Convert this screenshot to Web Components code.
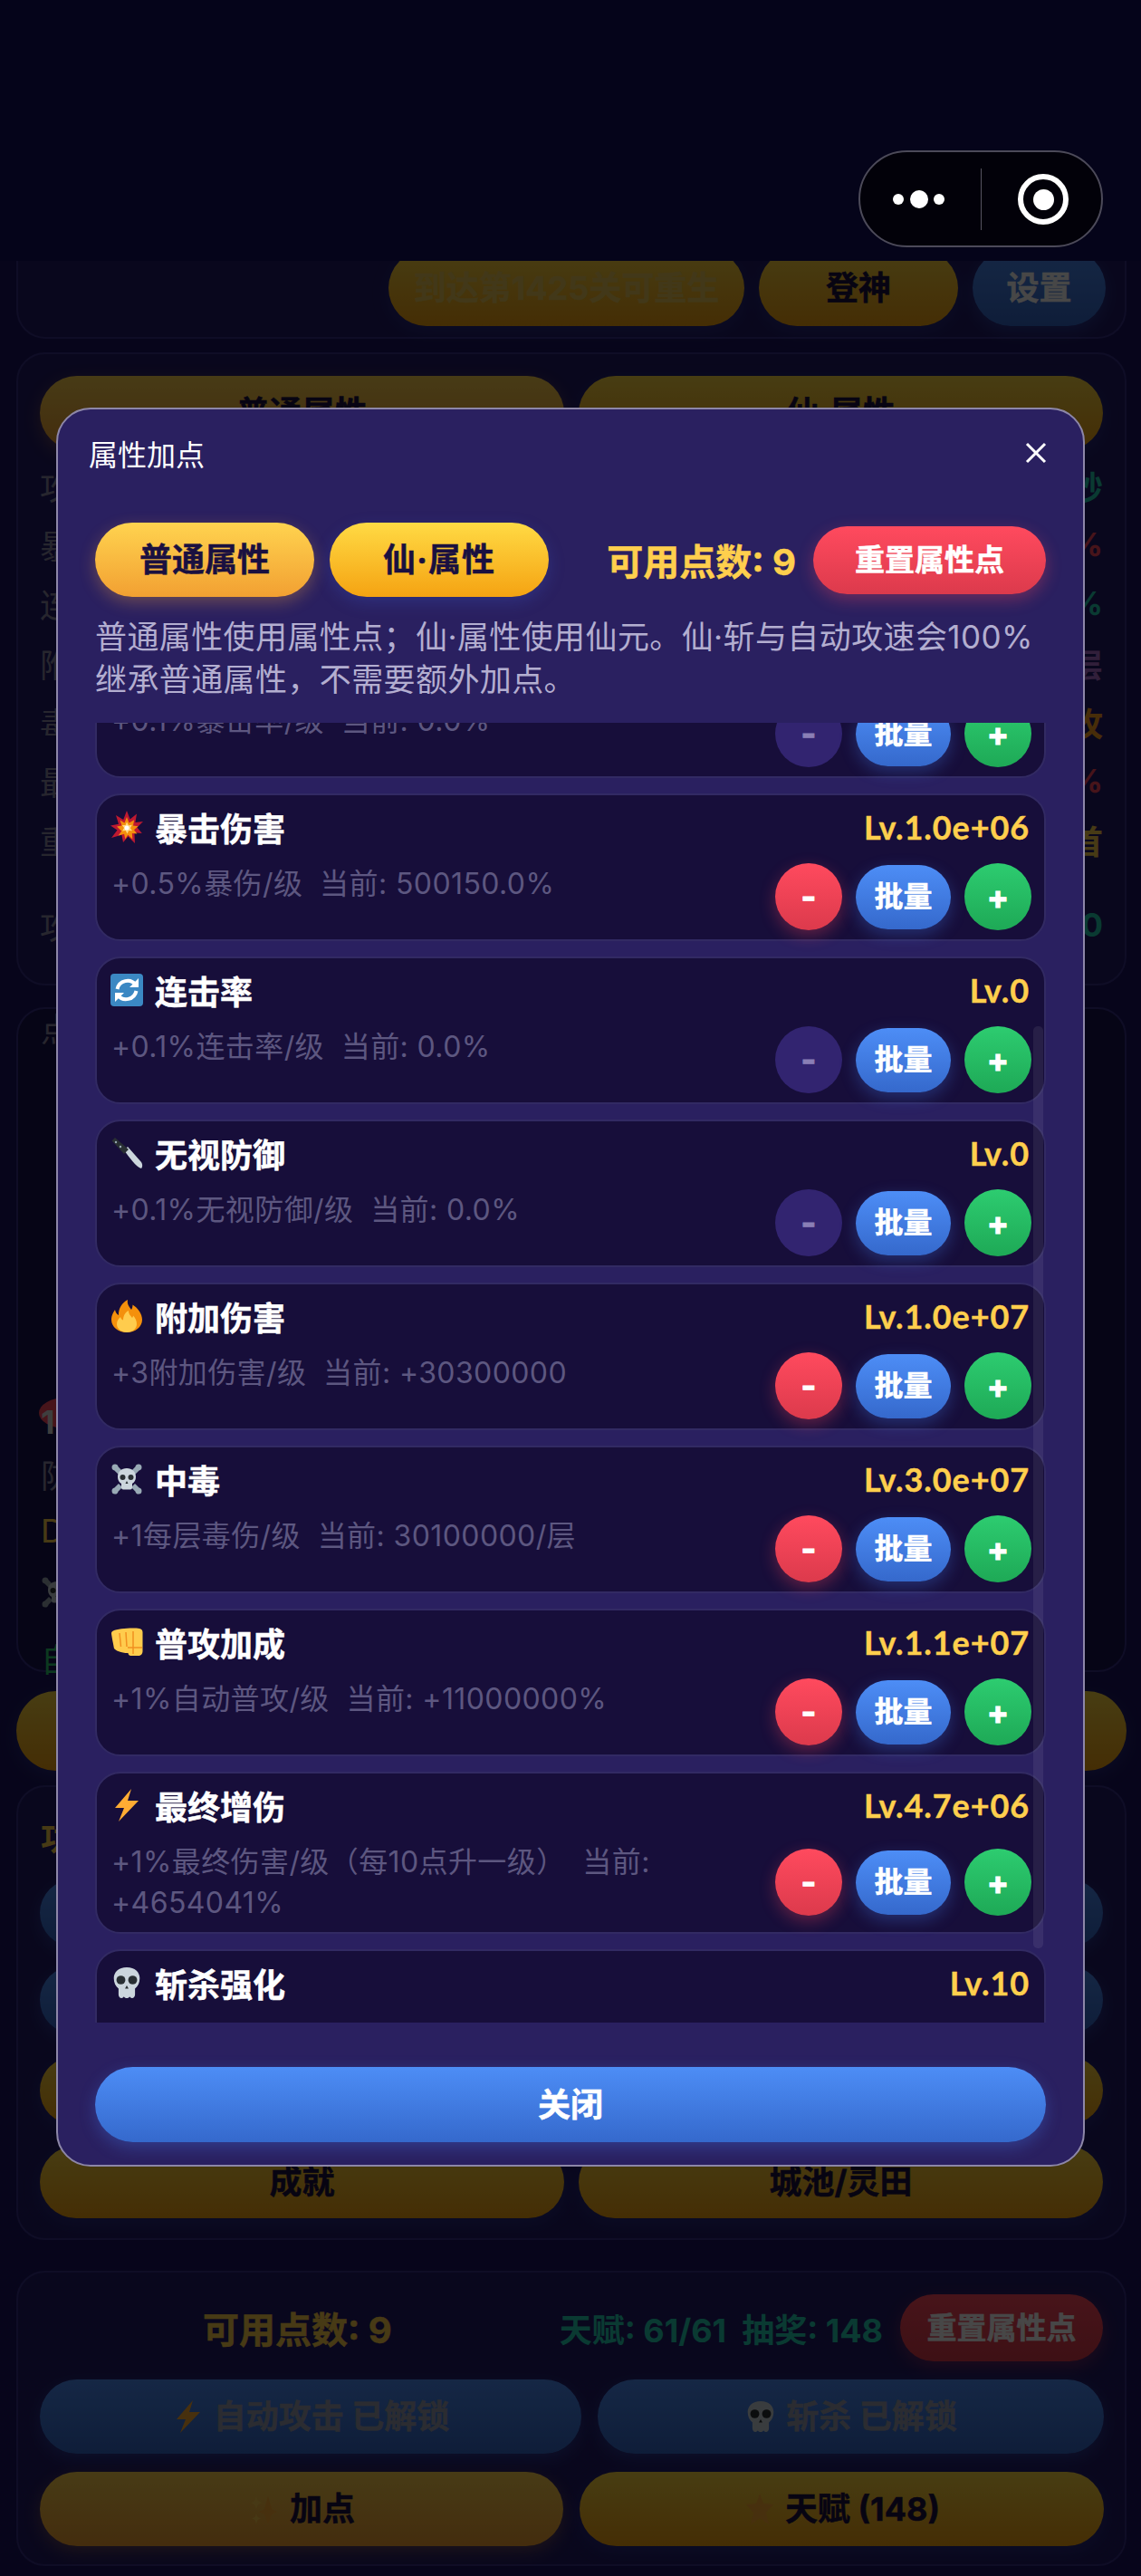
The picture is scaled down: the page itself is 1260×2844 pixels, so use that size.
<!DOCTYPE html>
<html lang="zh">
<head>
<meta charset="utf-8">
<title>属性加点</title>
<style>
  html, body { margin: 0; padding: 0; background: #1c1560; }
  body { font-family: Inter, "Noto Sans CJK SC", sans-serif; width: 1260px; height: 2844px; overflow: hidden; position: relative; }
</style>
</head>
<body>
<game-page></game-page>

<script>
// Emoji artwork shared by the attribute rows and the locked-feature buttons.
const ICONS = {
  burst: '<svg viewBox="0 0 36 36"><path fill="#be1931" d="M18 0l3.600 9.500L29 3.500l-1.600 9.400L36 12l-6.600 6.400 5.400 6.600-8.400-.8L27 36l-7.500-7.500L14 35l-1.600-8.200L1 30l6.500-8.500L0 16.500l9-1.700L6 5l8.200 5z"/><path fill="#f4900c" d="M18 7l2.600 6.400 5.600-3.200-1.200 6.400 5.500.6-4.500 4 3.400 4.400-5.500-.6.4 6.400-5-4.600-3 4.400-1.200-5.400-6.400 1.600 3.500-5L7 17.600l5.500-1.200-2-6 5 3z"/><path fill="#ffd983" d="M18 12.500l2 3.700 3.800-.5-1.800 3.500 2 3-3.800-.2-1.700 3.400-1.800-3.400-3.700.4 2-3.300-2.200-3 3.800-.2z"/><circle cx="18" cy="19" r="2.500" fill="#fff"/></svg>',
  cycle: '<svg viewBox="0 0 36 36"><rect width="36" height="36" rx="4" fill="#3b88c3"/><path fill="none" stroke="#fff" stroke-width="4" d="M28 12.500A11.500 11.500 0 0 0 7.500 17M8 23.500A11.500 11.500 0 0 0 28.500 19"/><path fill="#fff" d="M31 5v10h-10zM5 31V21h10z"/></svg>',
  knife: '<svg viewBox="0 0 36 36"><path fill="#ccd6dd" d="M15 15l4-4 15 17c2 3 1 6 0 7-6-2-13-12-19-20z"/><path fill="#292f33" d="M1.500 4.500L5 1l15 13-5 5z"/><circle cx="6" cy="6" r="1.200" fill="#99aab5"/><circle cx="11" cy="11" r="1.200" fill="#99aab5"/></svg>',
  fire: '<svg viewBox="0 0 36 36"><path fill="#f4900c" d="M35 22c0 8-7.600 14-17 14S1 30 1 22c0-5 2.500-8.500 4-11 .5 3 2 5 4 6C8.500 10 13 3 19 0c-1 5 2 8 4 11 1-1.500 1.500-3.500 1.500-5.500C30 9 35 15 35 22z"/><path fill="#ffcc4d" d="M29 27c0 5-5 9-11 9S7 32 7 27c0-4 2-6 4-8 .5 2 1.500 3 3 3.500C14 18 16 14 20 12c0 4 2 5 4 8 .5-.8 1-1.500 1-2.500 2.500 2.500 4 5.500 4 9.500z"/></svg>',
  bones: '<svg viewBox="0 0 36 36"><g fill="#99aab5"><path d="M5 1.500a3.500 3.500 0 0 1 3.500 2.800L13 9l-4 4-4.600-4.500A3.500 3.500 0 0 1 1.500 5 3.500 3.500 0 0 1 5 1.500zM31 1.500A3.500 3.500 0 0 0 27.500 4.300L23 9l4 4 4.600-4.500A3.500 3.500 0 0 0 34.500 5 3.500 3.500 0 0 0 31 1.500zM5 34.500a3.500 3.500 0 0 0 3.500-2.800L13 27l-4-4-4.600 4.500A3.500 3.500 0 0 0 1.500 31 3.500 3.500 0 0 0 5 34.500zM31 34.500a3.500 3.500 0 0 1-3.500-2.800L23 27l4-4 4.600 4.500A3.500 3.500 0 0 1 34.500 31 3.500 3.500 0 0 1 31 34.500z"/></g><path fill="#ccd6dd" d="M18 6C12 6 8 10 8 15.500c0 3.500 1.500 6 4 7.500v4.500c0 1 1 2 2 2h8c1 0 2-1 2-2V23c2.500-1.500 4-4 4-7.500C28 10 24 6 18 6z"/><circle cx="13.500" cy="16" r="3" fill="#292f33"/><circle cx="22.500" cy="16" r="3" fill="#292f33"/><path fill="#292f33" d="M18 20l1.500 3h-3z"/></svg>',
  fist: '<svg viewBox="0 0 36 36"><path fill="#ffcc4d" d="M3 5.500C8 3 24 2 32 3c2 .3 3.500 2 3.500 4v21c0 3-2 5-5 5h-8c-2 0-3-1.500-3-3-1 0-5 0-8-1-3-1-6-2-7.500-4C3.500 22 1 10 1 8c0-1 1-2 2-2.500z"/><path fill="none" stroke="#f19020" stroke-width="1.500" d="M10 8l1.500 15M17 7l1 16M25 6v25M19 24h16"/></svg>',
  bolt: '<svg viewBox="0 0 36 36"><path fill="#ffac33" d="M23 0L5 21h10L9 36 31 13H19z"/></svg>',
  skull: '<svg viewBox="0 0 36 36"><g transform="translate(2.400 0) scale(1.300 1)"><path fill="#ccd6dd" d="M12 1C5 1 1 6.500 1 13c0 5 1.500 9 4 11.500V31c0 2 1 4 2.500 4s1.500-1.500 2-1.500.5 1.500 2.500 1.500 2-1.500 2.500-1.500.5 1.500 2 1.500 2.500-2 2.500-4v-6.500c2.500-2.500 4-6.500 4-11.500C23 6.500 19 1 12 1z"/><ellipse cx="7" cy="15" rx="3.800" ry="4.800" fill="#292f33"/><ellipse cx="17" cy="15" rx="3.800" ry="4.800" fill="#292f33"/><path fill="#292f33" d="M12 21l1.500 3.500h-3z"/></g></svg>',
  sparkle: '<svg viewBox="0 0 36 36"><path fill="#ffac33" d="M22 4l4 14 6 3-6 3-4 10-4-10-6-3 6-3z"/><path fill="#ffcc4d" d="M9 4l2 5 4 2-4 2-2 5-2-5-4-2 4-2zM9 23l1.500 4 3.500 1.500-3.500 1.500L9 34l-1.500-4L4 28.500 7.500 27z"/></svg>',
  star: '<svg viewBox="0 0 36 36"><path fill="#ffac33" d="M18 1l4 11 11 1-8 9 3 13-10-7-10 7 3-13-8-9 11-1z"/></svg>'
};

const shadow = (el, html) => {
  el.attachShadow({ mode: 'open' }).innerHTML = html;
};

// Pill button; tone picks the gradient, slotted text is the label.
class GameButton extends HTMLElement {
  constructor() {
    super();
    shadow(this, `<style>
      :host { display: flex; align-items: center; justify-content: center; gap: 10px; box-sizing: border-box;
        height: var(--h, 82px); border-radius: 999px; font: 700 var(--fs, 36px)/1 Inter, "Noto Sans CJK SC", sans-serif;
        -webkit-text-stroke: var(--stroke, .5px) currentColor; letter-spacing: var(--ls, 0);
        white-space: nowrap; color: #fff; flex: var(--flex, none); width: var(--w, auto); }
      :host([tone="gold"]) { background: linear-gradient(180deg, #ffda44, #f5a312); color: #1a1040; box-shadow: 0 6px 18px rgba(60,90,200,.28); }
      :host([tone="amber"]) { background: linear-gradient(180deg, #ffd34f, #f2a032); color: #1a1040; box-shadow: 0 6px 18px rgba(255,170,60,.3); }
      :host([tone="red"]) { background: linear-gradient(180deg, #ff4a5e, #dc3a4c); box-shadow: 0 6px 18px rgba(255,70,90,.32); }
      :host([tone="blue"]) { background: linear-gradient(180deg, #4d8df6, #3569cc); box-shadow: 0 6px 18px rgba(70,130,245,.3); }
      :host([tone="green"]) { background: linear-gradient(180deg, #2dcc70, #1ea956); }
      :host([tone="mute"]) { background: #322470; color: #8a7fb5; }
      ::slotted(svg) { width: var(--ic, 36px); height: 36px; flex: none; }
    </style><slot></slot>`);
  }
}
customElements.define('game-button', GameButton);

// One upgradable attribute: icon, name, level, description and the three steppers.
class StatRow extends HTMLElement {
  connectedCallback() {
    const off = this.hasAttribute('off');
    shadow(this, `<style>
      :host { display: block; box-sizing: border-box; width: 1050px; background: #170e3a; border: 2px solid #322a63;
        border-radius: 28px; padding: 13px 14px 10px 15px; flex: none; }
      :host([clipped]) { min-height: 163px; }
      .head { display: flex; align-items: center; justify-content: space-between; height: 44px; }
      .name { display: flex; align-items: center; font-size: 36px; font-weight: 700; color: #fff; -webkit-text-stroke: .5px #fff; }
      .name svg { width: 36px; height: 36px; margin-right: 13px; flex: none; }
      .lv { font-family: Lato, Inter, sans-serif; font-size: 36px; font-weight: 700; letter-spacing: .9px; color: #ffcf4d; margin-right: 2px; -webkit-text-stroke: .4px #ffcf4d; }
      .body { display: flex; align-items: center; justify-content: space-between; gap: 40px; margin-top: 18px; }
      .desc { flex: 1; font-size: 32px; line-height: 45px; letter-spacing: .4px; color: #5d5780; margin-left: 1px; align-self: flex-start; }
      .ctl { display: flex; align-items: center; gap: 15px; flex: none; }
      .round { --w: 74px; --h: 74px; --fs: 36px; --stroke: 1px; }
      .batch { --w: 105px; --h: 71px; --fs: 32px; }
    </style>
    <div class="head">
      <div class="name">${ICONS[this.getAttribute('icon')]}<span>${this.getAttribute('name')}</span></div>
      <div class="lv">${this.getAttribute('lv')}</div>
    </div>
    <div class="body" style="${this.hasAttribute('clipped') ? 'display:none' : ''}">
      <div class="desc">${this.getAttribute('desc')}</div>
      <div class="ctl">
        <game-button class="round" tone="${off ? 'mute' : 'red'}">-</game-button>
        <game-button class="batch" tone="blue">批量</game-button>
        <game-button class="round" tone="green">+</game-button>
      </div>
    </div>`);
  }
}
customElements.define('stat-row', StatRow);

// The attribute dialog that sits over the dimmed game page.
class AttrDialog extends HTMLElement {
  constructor() {
    super();
    shadow(this, `<style>
      :host { position: absolute; left: 62px; top: 450px; width: 1136px; height: 1942px; box-sizing: border-box;
        background: #2a2060; border: 2px solid #8d87a8; border-radius: 38px; color: #fff; display: flex; flex-direction: column; padding: 0 41px; overflow: hidden; }
      .title { display: flex; justify-content: space-between; align-items: center; height: 96px; margin: 0 -3px 0 -7px; font-size: 32px; font-weight: 400; }
      .close { width: 28px; height: 28px; }
      .tabs { display: flex; align-items: center; margin-top: 29px; height: 82px; gap: 17px; }
      .tabs game-button { --w: 242px; }
      .tabs .xian { --ls: 1px; }
      .tabs .pts { margin-left: auto; font-size: 40px; font-weight: 700; color: #ffcf4d; margin-right: 2px; -webkit-text-stroke: .5px #ffcf4d; }
      .tabs .reset { --w: 257px; --h: 75px; --fs: 33px; }
      .note { font-size: 35px; line-height: 47px; letter-spacing: .4px; color: #b3aed0; margin-top: 21px; height: 118px; white-space: nowrap; }
      .scroll { position: relative; height: 1435px; overflow: hidden; flex: none; }
      .list { display: flex; flex-direction: column; gap: 17px; margin-top: -102px; }
      .thumb { position: absolute; right: 3px; top: 335px; width: 11px; height: 1018px; background: rgba(255,255,255,.07); border-radius: 5px; }
      .done { --h: 83px; --fs: 36px; margin-top: 49px; }
    </style>
    <div class="title"><span>属性加点</span>
      <svg class="close" viewBox="0 0 28 28"><path d="M4 4l20 20M24 4L4 24" stroke="#fff" stroke-width="3"/></svg></div>
    <div class="tabs">
      <game-button tone="amber">普通属性</game-button>
      <game-button class="xian" tone="gold">仙·属性</game-button>
      <span class="pts">可用点数: 9</span>
      <game-button class="reset" tone="red">重置属性点</game-button>
    </div>
    <div class="note">普通属性使用属性点；仙·属性使用仙元。仙·斩与自动攻速会100%<br>继承普通属性，不需要额外加点。</div>
    <div class="scroll">
      <div class="list">
        <stat-row icon="burst" name="暴击率" lv="Lv.0" off desc="+0.1%暴击率/级&nbsp;&nbsp;当前: 0.0%"></stat-row>
        <stat-row icon="burst" name="暴击伤害" lv="Lv.1.0e+06" desc="+0.5%暴伤/级&nbsp;&nbsp;当前: 500150.0%"></stat-row>
        <stat-row icon="cycle" name="连击率" lv="Lv.0" off desc="+0.1%连击率/级&nbsp;&nbsp;当前: 0.0%"></stat-row>
        <stat-row icon="knife" name="无视防御" lv="Lv.0" off desc="+0.1%无视防御/级&nbsp;&nbsp;当前: 0.0%"></stat-row>
        <stat-row icon="fire" name="附加伤害" lv="Lv.1.0e+07" desc="+3附加伤害/级&nbsp;&nbsp;当前: +30300000"></stat-row>
        <stat-row icon="bones" name="中毒" lv="Lv.3.0e+07" desc="+1每层毒伤/级&nbsp;&nbsp;当前: 30100000/层"></stat-row>
        <stat-row icon="fist" name="普攻加成" lv="Lv.1.1e+07" desc="+1%自动普攻/级&nbsp;&nbsp;当前: +11000000%"></stat-row>
        <stat-row icon="bolt" name="最终增伤" lv="Lv.4.7e+06" desc="+1%最终伤害/级（每10点升一级）&nbsp;&nbsp;当前: +4654041%"></stat-row>
        <stat-row icon="skull" name="斩杀强化" lv="Lv.10" clipped></stat-row>
      </div>
      <div class="thumb"></div>
    </div>
    <game-button class="done" tone="blue">关闭</game-button>`);
  }
}
customElements.define('attr-dialog', AttrDialog);

// Rounded panel of the game page.
class GamePanel extends HTMLElement {
  constructor() {
    super();
    shadow(this, `<style>
      :host { display: block; box-sizing: border-box; margin: 0 16px 0 18px; background: var(--bg, #221b68); border: 2px solid #37308a; border-radius: 32px; padding: var(--pad, 24px); height: var(--height, auto); }
    </style><slot></slot>`);
  }
}
customElements.define('game-panel', GamePanel);

// The game page behind the dialog, with the status bar and menu capsule on top.
class GamePage extends HTMLElement {
  constructor() {
    super();
    const rows = [['攻','秒','#25d0b5'],['暴','%','#ff4a5e'],['连','%','#25d0b5'],['附','层','#b06fd0'],['毒','攻','#ffa020'],['最','%','#ff4a5e'],['重','首','#ffcf4d']];
    shadow(this, `<style>
      :host { display: block; position: absolute; inset: 0; background: #1c1560; font-family: Inter, "Noto Sans CJK SC", sans-serif; overflow: hidden; }
      .nav { height: 288px; background: #05041a; position: relative; z-index: 1; }
      .capsule { position: absolute; left: 948px; top: 166px; width: 270px; height: 107px; box-sizing: border-box; border: 2px solid #4c4a59; border-radius: 54px; background: #020109; }
      .capsule i { position: absolute; background: #fff; border-radius: 50%; }
      .capsule b { position: absolute; left: 133px; top: 18px; width: 1px; height: 68px; background: #55535f; }
      .ring { position: absolute; left: 174px; top: 24px; width: 56px; height: 56px; border: 6px solid #fff; border-radius: 50%; box-sizing: border-box; }
      .ring::after { content: ""; position: absolute; inset: 10.5px; background: #fff; border-radius: 50%; }
      .top { --height: 86px; --pad: 0 21px 12px 0; display: flex; border-top: 0; border-radius: 0 0 32px 32px; }
      .row { display: flex; gap: 16px; justify-content: flex-end; align-items: flex-end; height: 72px; }
      .row game-button { --h: 84px; --fs: 36px; flex: none; }
      .stats { margin-top: 15px; --height: 699px; --pad: 24px; }
      .two { display: flex; gap: 16px; }
      .line { display: flex; justify-content: space-between; height: 65.300px; align-items: center; font-size: 36px; font-weight: 700; }
      .hero { margin-top: 24px; --height: 734px; --pad: 0 24px; --bg: #181250; position: relative; }
      .stack { font-size: 36px; color: #fff; }
      .stack div { position: absolute; left: 25px; }
      .badge { position: absolute; left: 23px; top: 429px; width: 60px; height: 34px; background: #ff4a5e; border-radius: 50%; }
      .mid { margin: 21px 16px 0 18px; --h: 88px; --w: 1226px; }
      .menu { margin-top: 16px; --height: 502px; --pad: 0 24px; position: relative; }
      .menu .stack-rows { display: flex; flex-direction: column; margin-top: 102px; }
      .menu game-button { --h: 74px; }
      .menu .r { display: flex; gap: 16px; }
      .menu .r game-button { --h: 80px; }
      .last { margin-top: 34px; --height: 326px; --pad: 24px 24px; position: relative; }
      .lh { display: flex; align-items: center; height: 74px; }
      .lh .p { font-size: 40px; font-weight: 700; color: #ffcf4d; margin-left: 180px; -webkit-text-stroke: .5px #ffcf4d; }
      .lh .t { font-size: 36px; font-weight: 700; color: #25d0b5; margin-right: 19px; white-space: pre; margin-left: auto; }
      .lh game-button { --w: 224px; --h: 74px; --fs: 33px; }
      .l2 { display: flex; gap: 18px; margin-top: 20px; }
      .veil { position: absolute; left: 0; right: 0; top: 288px; bottom: 0; background: rgba(0,0,0,.72); }
    </style>
    <div class="nav">
      <div class="capsule"><i style="left:36px;top:46px;width:12px;height:12px"></i><i style="left:55px;top:42px;width:20px;height:20px"></i><i style="left:81px;top:46px;width:12px;height:12px"></i><b></b><div class="ring"></div></div>
    </div>
    <game-panel class="top">
      <div class="row" style="width:100%">
        <game-button tone="gold" style="--w:393px;color:#ecca5a;">到达第1425关可重生</game-button>
        <game-button tone="gold" style="--w:220px">登神</game-button>
        <game-button tone="blue" style="--w:147px;color:#fff">设置</game-button>
      </div>
    </game-panel>
    <game-panel class="stats">
      <div class="two"><game-button tone="amber" style="--flex:1">普通属性</game-button><game-button tone="gold" style="--flex:1">仙·属性</game-button></div>
      <div style="margin-top:6px">
        ${rows.map(r => `<div class="line"><span style="color:#8d88a5;font-weight:400">${r[0]}</span><span style="color:${r[2]}">${r[1]}</span></div>`).join('')}
        <div class="line" style="margin-top:28px"><span style="color:#8d88a5;font-weight:400">攻</span><span style="color:#25d0b5">0</span></div>
      </div>
    </game-panel>
    <game-panel class="hero">
      <div class="badge"></div>
      <div class="stack">
        <div style="top:-6px;color:#8d88a5">点</div>
        <div style="top:434px;font-weight:700;color:#ddd">1</div>
        <div style="top:487px;color:#8d88a5">防</div>
        <div style="top:554px;color:#ffcf4d">D</div>
        <div style="top:626px;width:36px;height:36px">${ICONS.bones}</div>
        <div style="top:690px;color:#2dcc70">自</div>
      </div>
    </game-panel>
    <game-button class="mid" tone="gold"></game-button>
    <game-panel class="menu">
      <div style="position:absolute;left:25px;top:28px;font-size:36px;font-weight:700;color:#ffcf4d">功</div>
      <div class="stack-rows">
        <game-button tone="blue"></game-button>
        <game-button tone="blue" style="margin-top:22px"></game-button>
        <game-button tone="gold" style="margin-top:26px"></game-button>
        <div class="r" style="margin-top:24px"><game-button tone="gold" style="--flex:1">成就</game-button><game-button tone="gold" style="--flex:1">城池/灵田</game-button></div>
      </div>
    </game-panel>
    <game-panel class="last">
      <div class="lh"><span class="p">可用点数: 9</span><span class="t">天赋: 61/61  抽奖: 148</span><game-button tone="red">重置属性点</game-button></div>
      <div class="l2">
        <game-button tone="blue" style="--w:598px;color:#9a9eb0">${ICONS.bolt}自动攻击 已解锁</game-button>
        <game-button tone="blue" style="--w:559px;color:#9a9eb0">${ICONS.skull}斩杀 已解锁</game-button>
      </div>
      <div class="l2">
        <game-button tone="amber" style="--w:578px">${ICONS.sparkle}加点</game-button>
        <game-button tone="gold" style="--w:579px">${ICONS.star}天赋 (148)</game-button>
      </div>
    </game-panel>
    <div class="veil"></div>
    <attr-dialog></attr-dialog>`);
  }
}
customElements.define('game-page', GamePage);
</script>
</body>
</html>
